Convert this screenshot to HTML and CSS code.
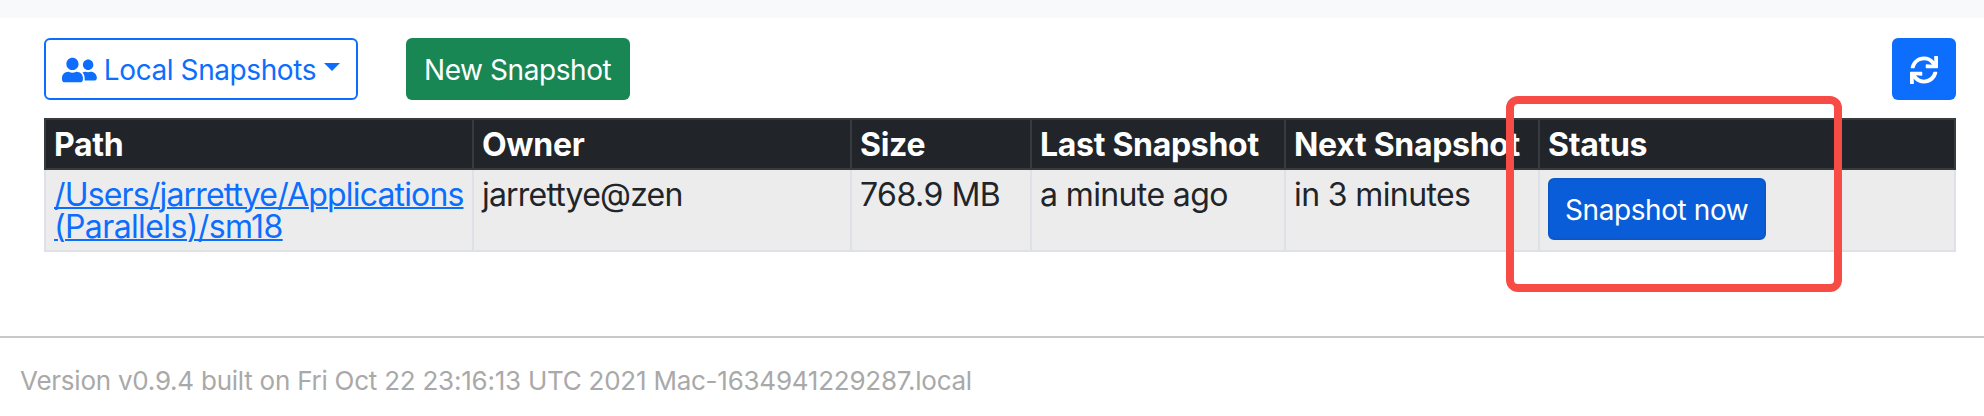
FILE: index.html
```html
<!DOCTYPE html>
<html lang="en">
<head>
  <meta charset="UTF-8">
  <meta name="viewport" content="width=device-width, initial-scale=1.0">
  <title>Snapshots</title>
  <link rel="stylesheet" href="styles.css">
</head>
<body>
  <div class="navbar-edge"></div>

  <main class="container">
    <!-- Toolbar -->
    <div class="toolbar">
      <button class="btn btn-outline" type="button">
        <svg class="icon-users" viewBox="0 0 640 512" preserveAspectRatio="none"><path fill="currentColor" d="M192 256c61.9 0 112-50.1 112-112S253.9 32 192 32 80 82.1 80 144s50.1 112 112 112zm76.8 32h-8.3c-20.8 10-43.9 16-68.5 16s-47.6-6-68.5-16h-8.3C51.6 288 0 339.6 0 403.2V432c0 26.5 21.5 48 48 48h288c26.5 0 48-21.5 48-48v-28.8c0-63.6-51.6-115.2-115.2-115.2zM480 256c53 0 96-43 96-96s-43-96-96-96-96 43-96 96 43 96 96 96zm48 32h-3.8c-13.9 4.8-28.6 8-44.2 8s-30.3-3.2-44.2-8H432c-20.4 0-39.2 5.9-55.7 15.4 24.4 26.3 39.7 61.2 39.7 99.8v38.4c0 2.2-.5 4.3-.6 6.4H592c26.5 0 48-21.5 48-48 0-61.9-50.1-112-112-112z"/></svg>
        <span class="btn-text">Local Snapshots</span>
        <span class="caret"></span>
      </button>
      <button class="btn btn-success" type="button"><span class="btn-text">New Snapshot</span></button>
      <button class="btn btn-primary btn-refresh" type="button" aria-label="Refresh">
        <svg class="icon-sync" viewBox="0 0 512 512"><path fill="currentColor" d="M440.65 12.57l4 82.77A247.16 247.16 0 0 0 255.83 8C134.73 8 33.91 94.92 12.29 209.82A12 12 0 0 0 24.09 224h49.05a12 12 0 0 0 11.67-9.26 175.91 175.91 0 0 1 317-56.94l-101.46-4.86a12 12 0 0 0-12.57 12v47.41a12 12 0 0 0 12 12H500a12 12 0 0 0 12-12V12a12 12 0 0 0-12-12h-47.37a12 12 0 0 0-11.98 12.57zM255.83 432a175.61 175.61 0 0 1-146-77.8l101.8 4.87a12 12 0 0 0 12.57-12v-47.4a12 12 0 0 0-12-12H12a12 12 0 0 0-12 12V500a12 12 0 0 0 12 12h47.35a12 12 0 0 0 12-12.6l-4.15-82.57A247.17 247.17 0 0 0 255.83 504c121.11 0 221.93-86.92 243.55-201.82a12 12 0 0 0-11.8-14.18h-49.05a12 12 0 0 0-11.67 9.26A175.86 175.86 0 0 1 255.83 432z"/></svg>
      </button>
    </div>

    <!-- Snapshot sources -->
    <div class="table-wrap">
      <table class="table">
        <colgroup>
          <col class="col-path">
          <col class="col-owner">
          <col class="col-size">
          <col class="col-last">
          <col class="col-next">
          <col class="col-status">
        </colgroup>
        <thead>
          <tr>
            <th>Path</th>
            <th>Owner</th>
            <th>Size</th>
            <th>Last Snapshot</th>
            <th>Next Snapshot</th>
            <th>Status</th>
          </tr>
        </thead>
        <tbody>
          <tr>
            <td><a class="path-link" href="#"><span class="path-dir">/Users/jarrettye/Applications</span><br>(Parallels)/sm18</a></td>
            <td class="owner">jarrettye@zen</td>
            <td class="size">768.9 MB</td>
            <td>a minute ago</td>
            <td>in 3 minutes</td>
            <td><button class="btn btn-primary btn-snapshot" type="button"><span class="btn-text">Snapshot now</span></button></td>
          </tr>
        </tbody>
      </table>
      <div class="highlight"></div>
    </div>
  </main>

  <footer class="footer">Version v0.9.4 built on Fri Oct 22 23:16:13 UTC 2021 Mac-1634941229287.local</footer>
</body>
</html>
```

FILE: styles.css
```css
:root {
  --blue: #0d6efd;
  --blue-dark: #0a5dd8;
  --green: #198754;
  --dark: #212529;
  --dark-border: #373b3e;
  --light-border: #dee2e6;
  --font: Inter, "Liberation Sans", sans-serif;
}

* {
  box-sizing: border-box;
}

body {
  margin: 0;
  background: #fff;
  color: var(--dark);
  font-family: var(--font);
  overflow: hidden;
}

.navbar-edge {
  height: 18px;
  background: #f8f9fb;
}

.container {
  padding: 20px 28px 0 44px;
}

/* Toolbar */
.toolbar {
  display: flex;
  margin-bottom: 18px;
}

.btn {
  display: flex;
  align-items: center;
  height: 62px;
  padding: 2px 16px 0;
  border: 2px solid transparent;
  border-radius: 6px;
  font-family: var(--font);
  font-size: 28px;
  line-height: 42px;
  white-space: nowrap;
  color: #fff;
}

.btn-text {
  letter-spacing: -0.42px;
}

.btn-outline {
  width: 314px;
  margin-right: 48px;
  border-color: var(--blue);
  background: #fff;
  color: var(--blue);
}

.btn-success {
  width: 224px;
  background: var(--green);
}

.btn-primary {
  background: var(--blue);
}

.btn-refresh {
  width: 64px;
  margin-left: auto;
}

.btn-refresh {
  padding-top: 0;
}

.btn-snapshot {
  width: 218px;
  margin-top: -1px;
  padding-left: 15px;
  background: var(--blue-dark);
  border-color: #0a58ca;
}

.icon-users {
  width: 36px;
  height: 28px;
  margin-right: 7px;
}

.icon-sync {
  width: 28px;
  height: 28px;
}

.btn-refresh .icon-sync {
  margin-top: 2px;
}

.caret {
  margin: 0 0 6px 8px;
  border-top: 8.4px solid;
  border-right: 8.4px solid transparent;
  border-left: 8.4px solid transparent;
}

/* Table */
.table-wrap {
  position: relative;
}

.table {
  width: 1912px;
  table-layout: fixed;
  border-collapse: collapse;
  font-size: 32px;
  line-height: 32px;
}

.col-path { width: 428px; }
.col-owner { width: 378px; }
.col-size { width: 180px; }
.col-last { width: 254px; }
.col-next { width: 254px; }
.col-status { width: 416px; }

.table th,
.table td {
  padding: 9px 8px 7px;
  text-align: left;
  vertical-align: top;
  white-space: nowrap;
}

.table th {
  border: 2px solid var(--dark-border);
  background: var(--dark);
  color: #fff;
  font-weight: 700;
  letter-spacing: -0.3px;
}

.table td {
  height: 82px;
  border: 2px solid var(--light-border);
  background: #ececec;
  letter-spacing: -0.62px;
}

.table .owner {
  letter-spacing: -0.8px;
}

.table .size {
  letter-spacing: -0.5px;
}

.path-link {
  color: var(--blue);
  text-decoration: underline;
  text-decoration-thickness: 2px;
}

.path-dir {
  letter-spacing: -0.84px;
}

/* Marker around the status column */
.highlight {
  position: absolute;
  top: -22px;
  left: 1462px;
  width: 336px;
  height: 196px;
  border: 8px solid #f74c46;
  border-radius: 12px;
}

/* Footer */
.footer {
  margin-top: 84px;
  padding: 27px 20px 0;
  border-top: 2px solid #c8c8c8;
  color: #a9a9a9;
  font-size: 26px;
  line-height: 32px;
  letter-spacing: -0.24px;
}
```
